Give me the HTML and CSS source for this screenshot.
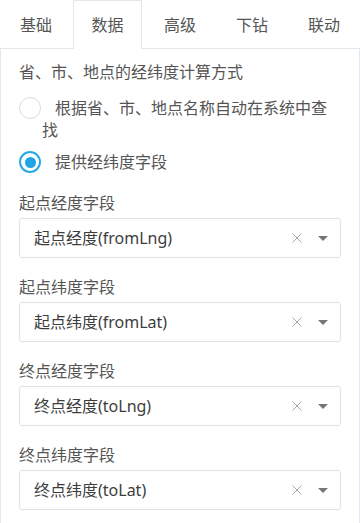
FILE: index.html
```html
<!DOCTYPE html>
<html lang="zh-CN">
<head>
<meta charset="utf-8">
<title>数据</title>
<link rel="stylesheet" href="styles.css">
</head>
<body>
<div class="tabs">
  <div class="tab">基础</div>
  <div class="tab active">数据</div>
  <div class="tab">高级</div>
  <div class="tab">下钻</div>
  <div class="tab">联动</div>
</div>
<div class="panel">
  <div class="title">省、市、地点的经纬度计算方式</div>
  <div class="radio-row first">
    <span class="radio"></span>
    <div class="radio-text">根据省、市、地点名称自动在系统中查找</div>
  </div>
  <div class="radio-row second">
    <span class="radio checked"></span>
    <div class="radio-text">提供经纬度字段</div>
  </div>
  <div class="fields">
    <div class="field">
      <div class="field-label">起点经度字段</div>
      <div class="select">
        <span class="select-value">起点经度(fromLng)</span>
        <svg class="clear" width="10" height="10" viewBox="0 0 10 10"><path d="M0.5 0.5L9.5 9.5M9.5 0.5L0.5 9.5" stroke="#a9a9a9" stroke-width="1" fill="none"/></svg>
        <svg class="caret" width="10" height="5" viewBox="0 0 10 5"><path d="M0 0H10L5 5Z" fill="#767676"/></svg>
      </div>
    </div>
    <div class="field">
      <div class="field-label">起点纬度字段</div>
      <div class="select">
        <span class="select-value">起点纬度(fromLat)</span>
        <svg class="clear" width="10" height="10" viewBox="0 0 10 10"><path d="M0.5 0.5L9.5 9.5M9.5 0.5L0.5 9.5" stroke="#a9a9a9" stroke-width="1" fill="none"/></svg>
        <svg class="caret" width="10" height="5" viewBox="0 0 10 5"><path d="M0 0H10L5 5Z" fill="#767676"/></svg>
      </div>
    </div>
    <div class="field">
      <div class="field-label">终点经度字段</div>
      <div class="select">
        <span class="select-value">终点经度(toLng)</span>
        <svg class="clear" width="10" height="10" viewBox="0 0 10 10"><path d="M0.5 0.5L9.5 9.5M9.5 0.5L0.5 9.5" stroke="#a9a9a9" stroke-width="1" fill="none"/></svg>
        <svg class="caret" width="10" height="5" viewBox="0 0 10 5"><path d="M0 0H10L5 5Z" fill="#767676"/></svg>
      </div>
    </div>
    <div class="field">
      <div class="field-label">终点纬度字段</div>
      <div class="select">
        <span class="select-value">终点纬度(toLat)</span>
        <svg class="clear" width="10" height="10" viewBox="0 0 10 10"><path d="M0.5 0.5L9.5 9.5M9.5 0.5L0.5 9.5" stroke="#a9a9a9" stroke-width="1" fill="none"/></svg>
        <svg class="caret" width="10" height="5" viewBox="0 0 10 5"><path d="M0 0H10L5 5Z" fill="#767676"/></svg>
      </div>
    </div>
  </div>
</div>
</body>
</html>
```
FILE: styles.css
```css
html, body {
  margin: 0;
  padding: 0;
  background: #fff;
}
body {
  font-family: "Noto Sans", "Noto Sans CJK SC", sans-serif;
  font-size: 16px;
  color: #555;
  width: 360px;
  overflow: hidden;
}
.tabs {
  display: flex;
  height: 48px;
  border-bottom: 1px solid #e3e7eb;
}
.tab {
  flex: 0 0 72px;
  width: 72px;
  height: 48px;
  box-sizing: border-box;
  padding-top: 1px;
  display: flex;
  align-items: center;
  justify-content: center;
  color: #555;
  line-height: 22px;
}
.tab.active {
  flex: 0 0 69px;
  width: 69px;
  margin: 0 2px 0 1px;
  height: 49px;
  padding-top: 0;
  border: 1px solid #e3e7eb;
  border-bottom: none;
  background: #fff;
}
.panel {
  border-left: 1px solid #e3e7eb;
  border-right: 1px solid #e3e7eb;
  padding: 12px 18px 20px;
}
.title {
  line-height: 22px;
  margin-bottom: 14px;
}
.radio-row {
  display: flex;
  align-items: flex-start;
  line-height: 22px;
}
.radio-row.second {
  margin-top: 10px;
}
.radio {
  flex: 0 0 22px;
  width: 22px;
  height: 22px;
  box-sizing: border-box;
  border: 1px solid #d6dde2;
  border-radius: 50%;
  display: flex;
  align-items: center;
  justify-content: center;
  background: #fff;
}
.radio.checked {
  border: 2px solid #28a9e6;
}
.radio.checked::after {
  content: "";
  width: 11px;
  height: 11px;
  border-radius: 50%;
  background: #1fa5e3;
}
.radio-text {
  flex: 1;
  text-indent: 13px;
  padding-right: 8px;
  padding-left: 1px;
  color: #555;
}
.fields {
  margin-top: 19px;
  display: flex;
  flex-direction: column;
  gap: 18px;
}
.field-label {
  line-height: 22px;
  margin-bottom: 4px;
}
.select {
  height: 40px;
  box-sizing: border-box;
  border: 1px solid #dde2e6;
  border-radius: 3px;
  display: flex;
  align-items: center;
  padding: 0 12px 0 14px;
}
.select-value {
  flex: 1;
  color: #3d3d3d;
  line-height: 22px;
  white-space: nowrap;
}
.clear {
  display: block;
  margin-right: 16px;
}
.caret {
  display: block;
}
```
